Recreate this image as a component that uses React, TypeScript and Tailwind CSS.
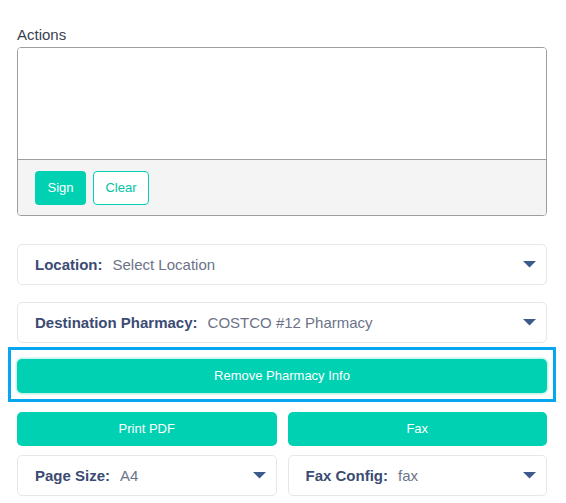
import React from "react";

type SelectProps = {
  label: string;
  value: string;
};

function Caret() {
  return (
    <svg width="13" height="7" viewBox="0 0 13 7" className="shrink-0">
      <path d="M0 0h13L6.5 6.5z" fill="#3d5a8c" />
    </svg>
  );
}

function SelectField({ label, value }: SelectProps) {
  return (
    <div className="flex h-[41px] items-center justify-between rounded-[5px] border border-[#e6e7ec] bg-white pl-[17px] pr-[10px]">
      <div className="flex items-center gap-[10px] text-[15px] leading-none">
        <span className="font-bold text-[#3b4b73]">{label}</span>
        <span className="text-[#6c7388]">{value}</span>
      </div>
      <Caret />
    </div>
  );
}

export default function App() {
  return (
    <div
      className="min-h-[503px] w-[566px] bg-white pl-[17px] pr-[19px] pt-[26px]"
      style={{ fontFamily: '"Liberation Sans", Arial, sans-serif' }}
    >
      {/* Signature pad */}
      <label className="block text-[15px] leading-[18px] text-[#3a3f4f]">Actions</label>
      <div className="mt-[3px] overflow-hidden rounded-[4px] border border-[#9e9e9e]">
        <div className="h-[111px] bg-white" />
        <div className="flex gap-[7px] border-t border-[#9e9e9e] bg-[#f4f4f4] px-[17px] pb-[10px] pt-[11px]">
          <button className="h-[34px] w-[51px] rounded-[4px] bg-[#00d1b2] text-[13px] text-white">
            Sign
          </button>
          <button className="h-[34px] w-[56px] rounded-[4px] border border-[#00d1b2] bg-white text-[13px] text-[#00c4a7]">
            Clear
          </button>
        </div>
      </div>

      <div className="mt-[28px] flex flex-col gap-[17px]">
        <SelectField label="Location:" value="Select Location" />
        <SelectField label="Destination Pharmacy:" value="COSTCO #12 Pharmacy" />
      </div>

      {/* Highlighted action */}
      <div className="-mx-[9px] mt-[4px] border-[3px] border-[#06a7ef] px-[6px] pb-[6px] pt-[9px]">
        <button className="h-[34px] w-full rounded-[5px] bg-[#00d1b2] text-[13px] text-white shadow-[0_0_0_1.5px_#c4f3eb]">
          Remove Pharmacy Info
        </button>
      </div>

      <div className="mt-[10px] grid grid-cols-2 gap-x-[11px] gap-y-[9px]">
        <button className="h-[34px] rounded-[5px] bg-[#00d1b2] text-[13px] text-white">Print PDF</button>
        <button className="h-[34px] rounded-[5px] bg-[#00d1b2] text-[13px] text-white">Fax</button>
        <SelectField label="Page Size:" value="A4" />
        <SelectField label="Fax Config:" value="fax" />
      </div>
    </div>
  );
}
